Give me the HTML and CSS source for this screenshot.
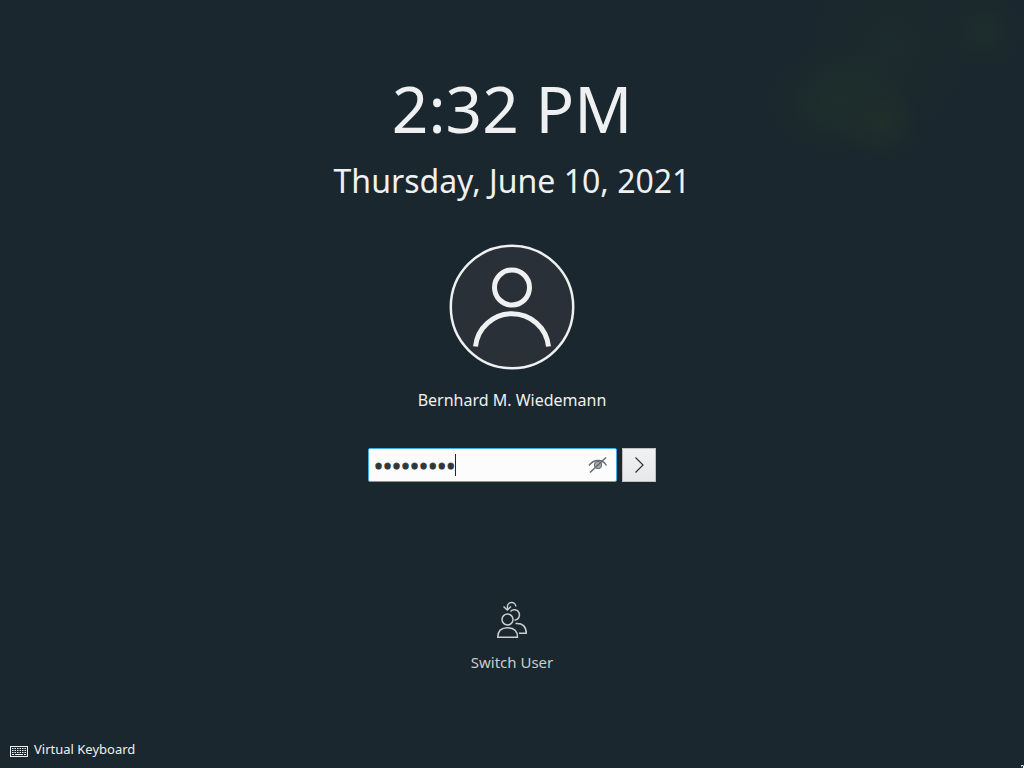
FILE: index.html
```html
<!DOCTYPE html>
<html lang="en">
<head>
<meta charset="utf-8">
<meta name="viewport" content="width=device-width, initial-scale=1">
<title>Lock Screen</title>
<link rel="stylesheet" href="styles.css">
</head>
<body class="lockscreen">
  <header class="clock">
    <time class="clock-time">2:32 PM</time>
    <time class="clock-date" datetime="2021-06-10">Thursday, June 10, 2021</time>
  </header>
  <main class="login">
    <svg class="avatar" viewBox="0 0 126 126" aria-hidden="true">
      <circle cx="63" cy="63" r="61.200" fill="#2a3038" stroke="#eff0f1" stroke-width="2.500"/>
      <circle cx="63" cy="43.500" r="17.500" fill="none" stroke="#eff0f1" stroke-width="5"/>
      <path d="M26.500 102.500A36.700 36.700 0 0 1 99.500 102.500" fill="none" stroke="#eff0f1" stroke-width="5"/>
    </svg>
    <h1 class="user-name">Bernhard M. Wiedemann</h1>
    <form class="login-form" onsubmit="return false">
      <div class="field">
        <input class="password" type="password" value="password1" aria-label="Password">
        <span class="caret" aria-hidden="true"></span>
        <button class="reveal" type="button" aria-label="Show password">
          <svg viewBox="0 0 20 18" fill="none" stroke="#63686d" aria-hidden="true">
            <path d="M1 9.500C4 5.300 6.500 4.500 10 4.500S16 5.300 18.500 9.500" stroke-width="1.400"/>
            <circle cx="10" cy="9" r="3.700" fill="#a4a7aa"/>
            <path d="M2 16.500L18 1.500" stroke-width="1.400"/>
          </svg>
        </button>
      </div>
      <button class="unlock" type="submit" aria-label="Unlock">
        <svg viewBox="0 0 32 32" fill="none" stroke="#31363b" stroke-width="1.200" aria-hidden="true"><path d="M12.500 8.500L20 16L12.500 23.500"/></svg>
      </button>
    </form>
  </main>
  <button class="switch-user" type="button">
    <svg class="switch-icon" viewBox="0 0 32 38" fill="none" stroke="#c9cdcf" stroke-width="1.500" aria-hidden="true">
      <circle cx="11.500" cy="18.500" r="5.500"/>
      <path d="M1.750 36.250C1.750 30 5.500 26.750 11.500 26.750S21.500 30 21.500 36.250Z"/>
      <path d="M14.500 10.500A5.200 5.200 0 1 1 18.500 19.200"/>
      <path d="M19.500 22.500C26.500 21.800 30.250 25.500 30.250 32.250H23"/>
      <path d="M19.800 5.500A4.200 4.200 0 0 0 11.400 6V9"/>
      <path d="M7.500 5.500L11.200 9L15 5.500"/>
    </svg>
    <span>Switch User</span>
  </button>
  <footer class="footer">
    <button class="keyboard" type="button">
      <svg class="keyboard-icon" viewBox="0 0 18 11" fill="none" stroke="#eff0f1" aria-hidden="true">
        <rect x=".5" y=".5" width="17" height="10"/>
        <path d="M2 2.500H16M2 4.500H16M2 6.500H16" stroke-dasharray="1.500 1"/>
        <path d="M2 8.500H4M5 8.500H13M14 8.500H16"/>
      </svg>
      <span>Virtual Keyboard</span>
    </button>
  </footer>
  <svg class="pointer" viewBox="0 0 3 3" aria-hidden="true"><path d="M0 0H2L3 1V3H1Z" fill="#eff0f1"/><path d="M1 1H2V3H1Z" fill="#31363b"/></svg>
</body>
</html>
```
FILE: styles.css
```css
* {
  box-sizing: border-box;
}

.lockscreen {
  display: flex;
  flex-direction: column;
  align-items: center;
  min-height: 100vh;
  margin: 0;
  padding-top: 65px;
  color: #eff0f1;
  font-family: "Noto Sans", sans-serif;
  font-size: 16px;
  line-height: 22px;
  background:
    radial-gradient(ellipse 4% 5% at 86% 16%, #1f2f29, transparent),
    radial-gradient(ellipse 7% 7% at 82% 13%, #1e2f2a, transparent),
    radial-gradient(ellipse 8% 12% at 87% 6%, #1c2b2c, transparent),
    radial-gradient(ellipse 4% 5% at 96% 4%, #1d2d2b, transparent),
    #1a272e;
}

button {
  padding: 0;
  border: 0;
  background: none;
  color: inherit;
  font: inherit;
}

.clock {
  display: flex;
  flex-direction: column;
  align-items: center;
  gap: 6px;
}

.clock-time {
  font-size: 64px;
  line-height: 88px;
}

.clock-date {
  font-size: 32px;
  line-height: 44px;
}

.login {
  display: flex;
  flex-direction: column;
  align-items: center;
  margin-top: 41px;
}

.avatar {
  width: 126px;
  height: 126px;
}

.user-name {
  margin: 19px 0 37px;
  font-size: 16px;
  font-weight: 400;
}

.login-form {
  display: flex;
  gap: 5px;
}

.field {
  position: relative;
  display: flex;
  align-items: center;
}

.password {
  width: 249px;
  height: 34px;
  padding: 0 32px 0 5px;
  border: 1px solid #3daee9;
  border-radius: 2px;
  outline: 0;
  background: #fcfcfc;
  color: #31363b;
  font-family: "Noto Sans", sans-serif;
  font-size: 24px;
  -webkit-text-stroke: 1px #31363b;
}

.caret {
  position: absolute;
  left: 87px;
  width: 1px;
  height: 22px;
  background: #232629;
}

.reveal {
  position: absolute;
  right: 9px;
  width: 20px;
  height: 18px;
}

.reveal svg,
.unlock svg {
  display: block;
  width: 100%;
}

.unlock {
  width: 34px;
  height: 34px;
  border: 1px solid #bcbebf;
  background: linear-gradient(#f0f1f2, #e7e8e9);
}

.switch-user {
  display: flex;
  flex-direction: column;
  align-items: center;
  gap: 12px;
  margin-top: 119px;
  color: #c9cdcf;
  font-size: 15px;
}

.switch-icon {
  width: 32px;
  height: 38px;
}

.footer {
  align-self: stretch;
  margin-top: auto;
  padding: 0 10px 8px;
}

.keyboard {
  display: flex;
  align-items: center;
  gap: 6px;
  font-size: 13px;
}

.keyboard-icon {
  width: 18px;
  height: 11px;
  margin-top: 4px;
}

.pointer {
  position: fixed;
  right: 0;
  bottom: 0;
  width: 3px;
  height: 3px;
}
```
